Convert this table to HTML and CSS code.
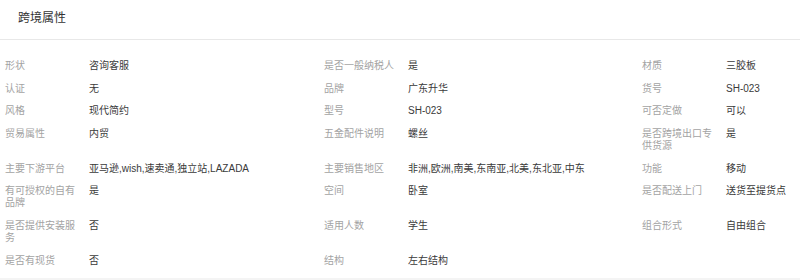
FILE: index.html
```html
<!DOCTYPE html>
<html lang="zh-CN">
<head>
<meta charset="utf-8">
<link rel="stylesheet" href="styles.css">
</head>
<body>
<div class="card">
  <div class="card-head"><span class="title">跨境属性</span></div>
  <div class="attrs">
    <div class="lbl">形状</div><div class="val">咨询客服</div>
    <div class="lbl">是否一般纳税人</div><div class="val">是</div>
    <div class="lbl">材质</div><div class="val">三胶板</div>

    <div class="lbl">认证</div><div class="val">无</div>
    <div class="lbl">品牌</div><div class="val">广东升华</div>
    <div class="lbl">货号</div><div class="val">SH-023</div>

    <div class="lbl">风格</div><div class="val">现代简约</div>
    <div class="lbl">型号</div><div class="val">SH-023</div>
    <div class="lbl">可否定做</div><div class="val">可以</div>

    <div class="lbl">贸易属性</div><div class="val">内贸</div>
    <div class="lbl">五金配件说明</div><div class="val">螺丝</div>
    <div class="lbl">是否跨境出口专供货源</div><div class="val">是</div>

    <div class="lbl">主要下游平台</div><div class="val">亚马逊,wish,速卖通,独立站,LAZADA</div>
    <div class="lbl">主要销售地区</div><div class="val">非洲,欧洲,南美,东南亚,北美,东北亚,中东</div>
    <div class="lbl">功能</div><div class="val">移动</div>

    <div class="lbl">有可授权的自有品牌</div><div class="val">是</div>
    <div class="lbl">空间</div><div class="val">卧室</div>
    <div class="lbl">是否配送上门</div><div class="val">送货至提货点</div>

    <div class="lbl">是否提供安装服务</div><div class="val">否</div>
    <div class="lbl">适用人数</div><div class="val">学生</div>
    <div class="lbl">组合形式</div><div class="val">自由组合</div>

    <div class="lbl">是否有现货</div><div class="val">否</div>
    <div class="lbl">结构</div><div class="val">左右结构</div>
    <div class="lbl"></div><div class="val"></div>
  </div>
</div>
</body>
</html>
```

FILE: styles.css
```css
html, body {
  margin: 0;
  padding: 0;
  background: #f4f4f4;
}
body {
  font-family: "Liberation Sans", "Noto Sans CJK SC", sans-serif;
  width: 800px;
  overflow: hidden;
}
.card {
  background: #ffffff;
  padding-bottom: 6px;
}
.card-head {
  height: 40px;
  box-sizing: border-box;
  border-bottom: 1px solid #e8e8e8;
  padding: 8px 0 0 18px;
}
.title {
  font-size: 12px;
  line-height: 16px;
  color: #333333;
}
.attrs {
  display: grid;
  grid-template-columns: 84px 235px 84px 234px 84px 1fr;
  padding: 14.67px 0 0 5px;
  font-size: 10px;
  line-height: 12px;
}
.lbl, .val {
  padding: 5.33px 0;
}
.lbl {
  color: #a3a3a3;
  padding-right: 10px;
}
.val {
  color: #3a3a3a;
  white-space: nowrap;
}
```
